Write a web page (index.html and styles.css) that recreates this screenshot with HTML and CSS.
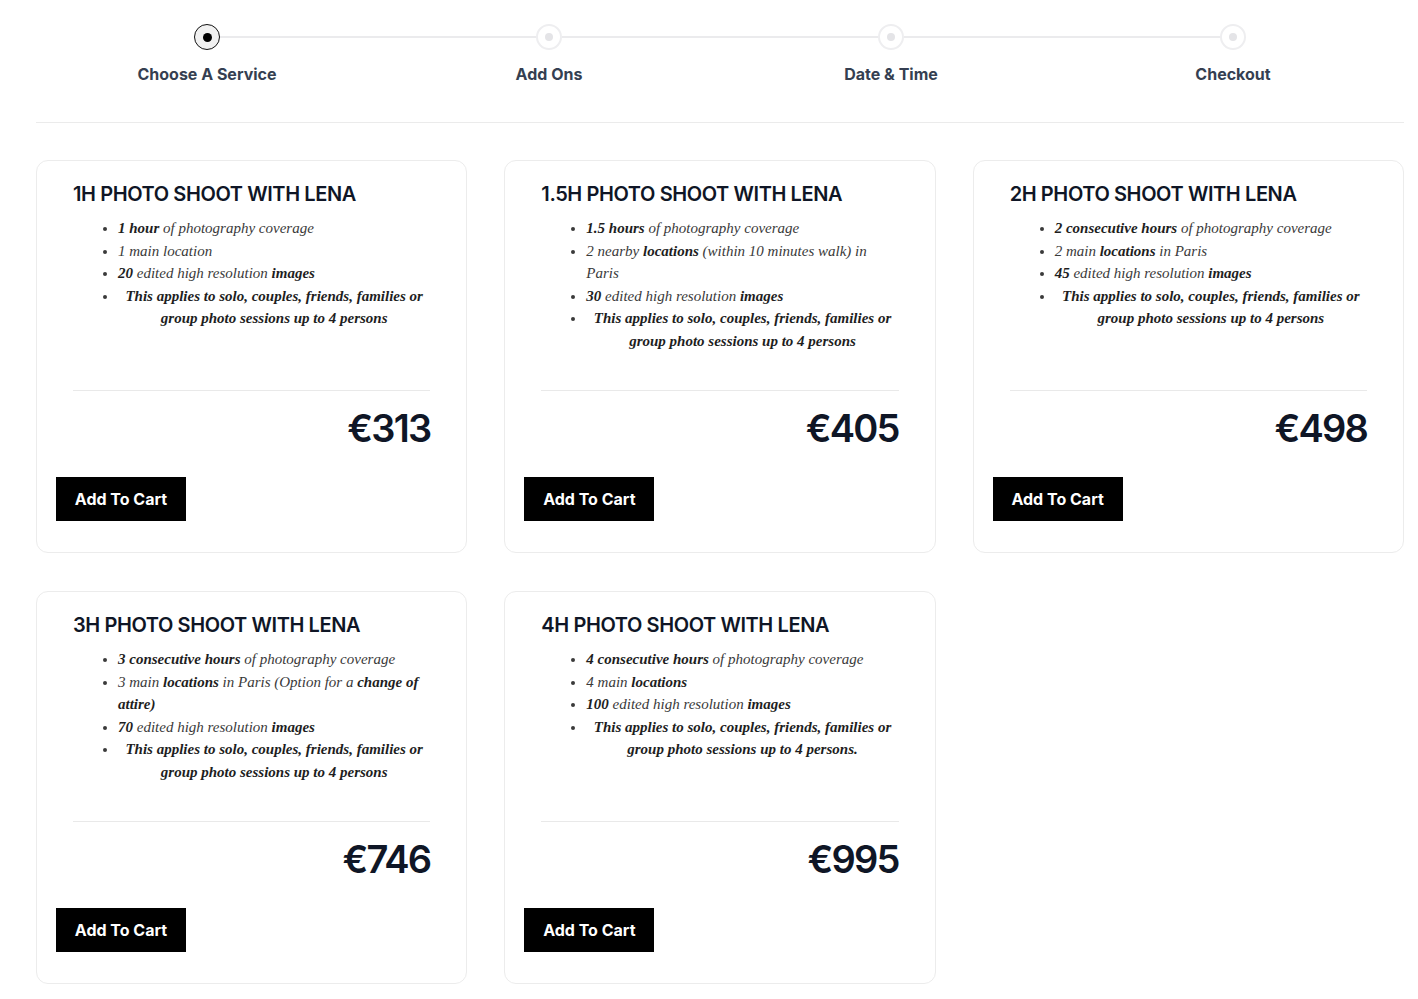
FILE: index.html
```html
<!DOCTYPE html>
<html lang="en">
<head>
    <meta charset="UTF-8">
    <meta name="viewport" content="width=device-width, initial-scale=1.0">
    <title>Book a Photo Shoot | Lena</title>
    <link rel="stylesheet" href="styles.css">
</head>
<body>
    <div class="container">
        <ol class="steps">
            <li class="step active">
                <div class="step-track">
                    <span class="track hidden"></span>
                    <span class="dot"></span>
                    <span class="track"></span>
                </div>
                <span class="step-label">Choose A Service</span>
            </li>
            <li class="step">
                <div class="step-track">
                    <span class="track"></span>
                    <span class="dot"></span>
                    <span class="track"></span>
                </div>
                <span class="step-label">Add Ons</span>
            </li>
            <li class="step">
                <div class="step-track">
                    <span class="track"></span>
                    <span class="dot"></span>
                    <span class="track"></span>
                </div>
                <span class="step-label">Date &amp; Time</span>
            </li>
            <li class="step">
                <div class="step-track">
                    <span class="track"></span>
                    <span class="dot"></span>
                    <span class="track hidden"></span>
                </div>
                <span class="step-label">Checkout</span>
            </li>
        </ol>

        <div class="services">
            <div class="card">
                <div class="card-info">
                    <h2 class="card-title">1H PHOTO SHOOT WITH LENA</h2>
                    <ul class="features">
                        <li><b>1 hour</b> of photography coverage</li>
                        <li>1 main location</li>
                        <li><b>20</b> edited high resolution <b>images</b></li>
                        <li class="note"><b>This applies to solo, couples, friends, families or</b> <b>group photo sessions up to 4 persons</b></li>
                    </ul>
                    <div class="price">€313</div>
                </div>
                <button type="button">Add To Cart</button>
            </div>

            <div class="card">
                <div class="card-info">
                    <h2 class="card-title">1.5H PHOTO SHOOT WITH LENA</h2>
                    <ul class="features">
                        <li><b>1.5 hours</b> of photography coverage</li>
                        <li>2 nearby <b>locations</b> (within 10 minutes walk) in<br>Paris</li>
                        <li><b>30</b> edited high resolution <b>images</b></li>
                        <li class="note"><b>This applies to solo, couples, friends, families or</b> <b>group photo sessions up to 4 persons</b></li>
                    </ul>
                    <div class="price">€405</div>
                </div>
                <button type="button">Add To Cart</button>
            </div>

            <div class="card">
                <div class="card-info">
                    <h2 class="card-title">2H PHOTO SHOOT WITH LENA</h2>
                    <ul class="features">
                        <li><b>2 consecutive hours</b> of photography coverage</li>
                        <li>2 main <b>locations</b> in Paris</li>
                        <li><b>45</b> edited high resolution <b>images</b></li>
                        <li class="note"><b>This applies to solo, couples, friends, families or</b> <b>group photo sessions up to 4 persons</b></li>
                    </ul>
                    <div class="price">€498</div>
                </div>
                <button type="button">Add To Cart</button>
            </div>

            <div class="card">
                <div class="card-info">
                    <h2 class="card-title">3H PHOTO SHOOT WITH LENA</h2>
                    <ul class="features">
                        <li><b>3 consecutive hours</b> of photography coverage</li>
                        <li>3 main <b>locations</b> in Paris (Option for a <b>change of</b> <b>attire)</b></li>
                        <li><b>70</b> edited high resolution <b>images</b></li>
                        <li class="note"><b>This applies to solo, couples, friends, families or</b> <b>group photo sessions up to 4 persons</b></li>
                    </ul>
                    <div class="price">€746</div>
                </div>
                <button type="button">Add To Cart</button>
            </div>

            <div class="card">
                <div class="card-info">
                    <h2 class="card-title">4H PHOTO SHOOT WITH LENA</h2>
                    <ul class="features">
                        <li><b>4 consecutive hours</b> of photography coverage</li>
                        <li>4 main <b>locations</b></li>
                        <li><b>100</b> edited high resolution <b>images</b></li>
                        <li class="note"><b>This applies to solo, couples, friends, families or</b> <b>group photo sessions up to 4 persons.</b></li>
                    </ul>
                    <div class="price">€995</div>
                </div>
                <button type="button">Add To Cart</button>
            </div>
        </div>
    </div>
</body>
</html>
```

FILE: styles.css
```css
body {
    margin: 0;
    padding: 0;
    background-color: #fff;
    font-family: Inter, "Liberation Sans", sans-serif;
}
.container {
    width: 1368px;
    margin-left: 36px;
    padding-top: 24px;
}

/* steps */
.steps {
    display: flex;
    list-style: none;
    margin: 0;
    padding: 0 0 37px;
    border-bottom: 1px solid #ebebeb;
}
.step {
    flex: 1;
    display: flex;
    flex-direction: column;
    align-items: center;
}
.step-track {
    display: flex;
    align-items: center;
    width: 100%;
}
.track {
    flex: 1;
    height: 2px;
    background-color: #ebebed;
}
.track.hidden {
    background-color: transparent;
}
.dot {
    width: 22px;
    height: 22px;
    border: 2px solid #eeeef0;
    border-radius: 50%;
    background: #fff;
    display: flex;
    align-items: center;
    justify-content: center;
}
.dot::after {
    content: "";
    width: 8px;
    height: 8px;
    border-radius: 50%;
    background-color: #e4e4e7;
}
.step.active .dot {
    width: 24px;
    height: 24px;
    border: 1px solid #111;
    background-color: #f1f1f1;
}
.step.active .dot::after {
    width: 9px;
    height: 9px;
    background-color: #000;
}
.step-label {
    margin-top: 13px;
    font-size: 16px;
    line-height: 22px;
    font-weight: 700;
    color: #353f51;
}

/* service cards */
.services {
    display: grid;
    grid-template-columns: repeat(3, 1fr);
    gap: 38px 37px;
    margin-top: 37px;
}
.card {
    border: 1px solid #ececec;
    border-radius: 12px;
    padding: 19px 19px 31px;
}
.card-info {
    padding: 0 17px;
}
.card-title {
    margin: 0;
    font-size: 20px;
    line-height: 28px;
    font-weight: 600;
    letter-spacing: -0.4px;
    color: #0f1626;
}
.features {
    margin: 9px 0 0;
    padding-left: 45px;
    min-height: 173px;
    font-family: "Liberation Serif", serif;
    font-style: italic;
    font-size: 15px;
    line-height: 22.5px;
    color: #3a3a3a;
}
.features b {
    color: #1e1e1e;
}
.features .note {
    text-align: center;
}
.price {
    border-top: 1px solid #e9e9e9;
    padding-top: 15px;
    text-align: right;
    font-size: 38px;
    line-height: 44px;
    font-weight: 600;
    color: #0f1626;
    letter-spacing: -1.8px;
}
button {
    margin-top: 27px;
    height: 44px;
    padding: 0 18px;
    min-width: 130px;
    background-color: #000;
    color: #fff;
    border: none;
    font-family: inherit;
    font-size: 16px;
    font-weight: 700;
    cursor: pointer;
}
```
